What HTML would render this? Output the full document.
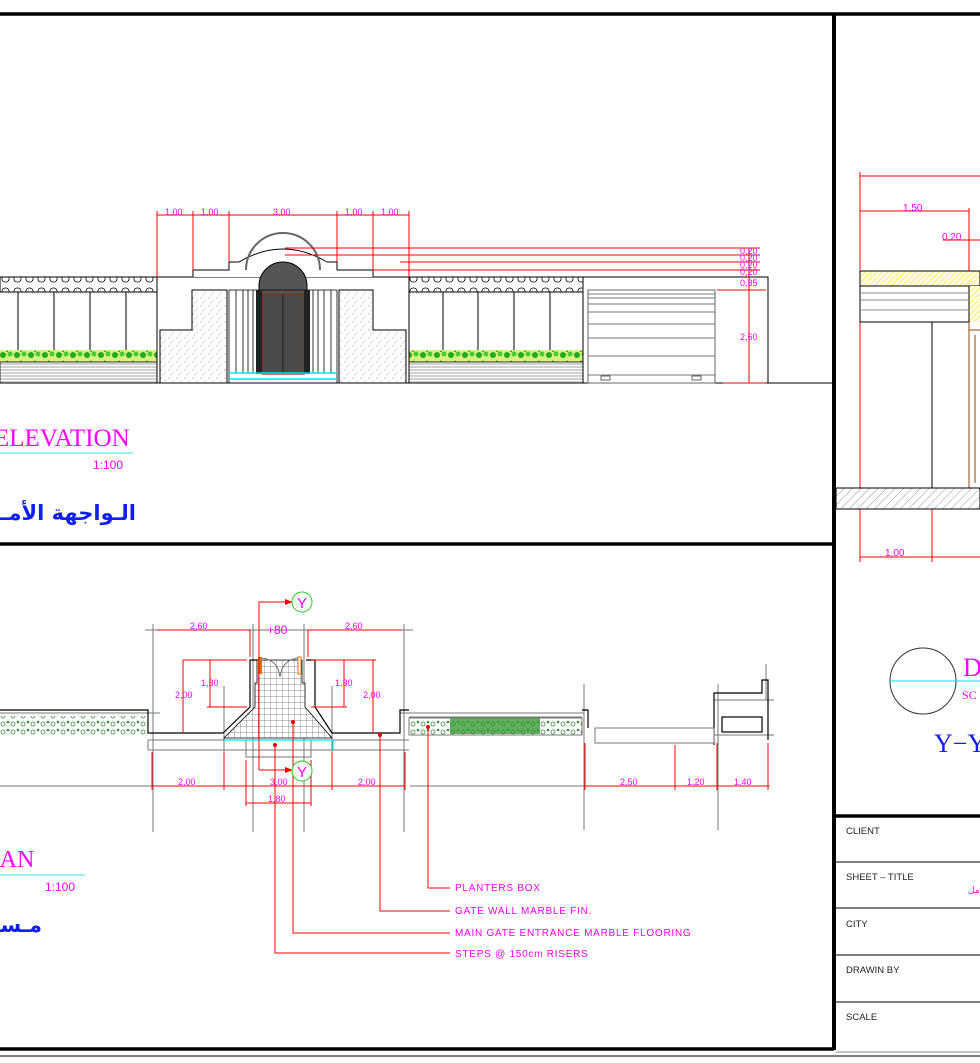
<!DOCTYPE html>
<html><head><meta charset="utf-8"><style>
html,body{margin:0;padding:0;background:#fff;width:980px;height:1063px;overflow:hidden}
svg{display:block}
.m{fill:#ff00ff;font-family:"Liberation Sans",sans-serif;font-size:9px}
.s{font-family:"Liberation Serif",serif}
.tb{font-family:"Liberation Sans",sans-serif;font-size:9.5px;fill:#222}
</style></head><body>
<svg width="980" height="1063" viewBox="0 0 980 1063" xmlns="http://www.w3.org/2000/svg">
<defs>
<pattern id="dots" width="8" height="8" patternUnits="userSpaceOnUse"><rect width="8" height="8" fill="#fff"/><circle cx="1" cy="2" r=".5" fill="#555"/><circle cx="5" cy="5" r=".5" fill="#777"/><circle cx="3" cy="7" r=".4" fill="#555"/></pattern>
<pattern id="bal" width="12" height="15" patternUnits="userSpaceOnUse"><rect width="12" height="15" fill="#fff"/><rect x="2" y="3" width="7" height="9" rx="3" fill="none" stroke="#000" stroke-width=".8"/></pattern>
<pattern id="hz" width="4" height="3" patternUnits="userSpaceOnUse"><rect width="4" height="3" fill="#fff"/><line x1="0" y1="1" x2="4" y2="1" stroke="#888" stroke-width=".8"/></pattern>
<pattern id="hy" width="4" height="4" patternUnits="userSpaceOnUse" patternTransform="rotate(45)"><rect width="4" height="4" fill="#fffbe0"/><line x1="0" y1="0" x2="0" y2="4" stroke="#eede30" stroke-width="1"/></pattern>
<pattern id="hg" width="6" height="6" patternUnits="userSpaceOnUse" patternTransform="rotate(45)"><rect width="6" height="6" fill="#fff"/><line x1="0" y1="0" x2="0" y2="6" stroke="#999" stroke-width="1"/></pattern>
<pattern id="grid" width="6" height="6" patternUnits="userSpaceOnUse"><rect width="6" height="6" fill="#fff"/><path d="M0 0H6M0 0V6" stroke="#666" stroke-width=".7"/></pattern>
<pattern id="gr" width="14" height="10" patternUnits="userSpaceOnUse"><rect width="14" height="10" fill="#d8f080"/><circle cx="3" cy="5" r="3" fill="#22aa22"/><circle cx="10" cy="4" r="2.5" fill="#44cc33"/><path d="M6 2l1-2 1 2z" fill="#119911"/></pattern>
<pattern id="gp" width="10" height="8" patternUnits="userSpaceOnUse"><rect width="10" height="8" fill="#fff"/><circle cx="3" cy="4" r="2" fill="none" stroke="#3a8a3a" stroke-width=".8"/><circle cx="8" cy="2" r="1.3" fill="#3a8a3a"/></pattern>
</defs>

<line x1="0" y1="14" x2="980" y2="14" stroke="#000" stroke-width="3.5"/>
<line x1="834" y1="13" x2="834" y2="1050" stroke="#000" stroke-width="4"/>
<line x1="0" y1="544" x2="834" y2="544" stroke="#000" stroke-width="3.5"/>
<line x1="0" y1="1049" x2="834" y2="1049" stroke="#000" stroke-width="3.5"/>
<line x1="834" y1="816" x2="980" y2="816" stroke="#000" stroke-width="3.5"/>
<line x1="0" y1="1056" x2="980" y2="1056" stroke="#000" stroke-width="1"/>
<line x1="836" y1="1052" x2="980" y2="1052" stroke="#888" stroke-width="1"/>
<g stroke="#000" stroke-width="1"><line x1="836" y1="862" x2="980" y2="862"/><line x1="836" y1="908" x2="980" y2="908"/><line x1="836" y1="955" x2="980" y2="955"/><line x1="836" y1="1002" x2="980" y2="1002"/></g>
<text class="tb" x="846" y="834">CLIENT</text>
<text class="tb" x="846" y="880">SHEET – TITLE</text>
<text x="968" y="893" style="font-size:9px;fill:#f0f;font-family:'DejaVu Sans',sans-serif">مل</text>
<text class="tb" x="846" y="927">CITY</text>
<text class="tb" x="846" y="973">DRAWIN BY</text>
<text class="tb" x="846" y="1020">SCALE</text>

<line x1="0" y1="383" x2="834" y2="383" stroke="#000" stroke-width="1"/>
<rect x="0" y="277" width="157" height="15" fill="url(#bal)" stroke="#000" stroke-width="1"/>
<g stroke="#000" stroke-width="1"><line x1="18" y1="292" x2="18" y2="352"/><line x1="54" y1="292" x2="54" y2="352"/><line x1="90" y1="292" x2="90" y2="352"/><line x1="126" y1="292" x2="126" y2="352"/></g>
<rect x="0" y="350" width="157" height="12" fill="url(#gr)"/>
<rect x="0" y="362" width="157" height="21" fill="url(#hz)" stroke="#000" stroke-width=".8"/>
<rect x="409" y="277" width="174" height="15" fill="url(#bal)" stroke="#000" stroke-width="1"/>
<line x1="409" y1="292" x2="583" y2="292" stroke="#000"/>
<g stroke="#000" stroke-width="1"><line x1="443" y1="292" x2="443" y2="352"/><line x1="478" y1="292" x2="478" y2="352"/><line x1="514" y1="292" x2="514" y2="352"/><line x1="550" y1="292" x2="550" y2="352"/></g>
<rect x="409" y="350" width="174" height="12" fill="url(#gr)"/>
<rect x="409" y="362" width="174" height="21" fill="url(#hz)" stroke="#000" stroke-width=".8"/>
<rect x="583" y="277" width="185" height="106" fill="none" stroke="#000" stroke-width="1"/>
<rect x="588" y="290" width="127" height="93" fill="#fff" stroke="#666" stroke-width="1"/>
<g stroke="#777" stroke-width="1"><line x1="588" y1="294" x2="715" y2="294"/><line x1="588" y1="298" x2="715" y2="298"/><line x1="588" y1="304" x2="715" y2="304"/><line x1="588" y1="312" x2="715" y2="312"/><line x1="588" y1="324" x2="715" y2="324"/><line x1="588" y1="338" x2="715" y2="338"/><line x1="588" y1="356" x2="715" y2="356"/><line x1="588" y1="375" x2="715" y2="375"/></g>
<rect x="601" y="376" width="9" height="4" fill="none" stroke="#666"/><rect x="692" y="376" width="9" height="4" fill="none" stroke="#666"/>
<rect x="157" y="277" width="252" height="106" fill="#fff" stroke="#000" stroke-width="1"/>
<path d="M193 277V270H229V262L239 262Q283 236 327 262H337V270H373V277" fill="#fff" stroke="#000"/>
<path d="M246 270A37 37 0 0 1 320 270" fill="none" stroke="#666" stroke-width="2"/>
<path d="M259 294V286A24 24 0 0 1 307 286V294Z" fill="#555" stroke="#000"/>
<path d="M160 383V330H192V290H227V383Z" fill="url(#dots)" stroke="#000"/>
<path d="M406 383V330H373V290H339V383Z" fill="url(#dots)" stroke="#000"/>
<g stroke="#000" stroke-width=".8"><line x1="229" y1="290" x2="229" y2="383"/><line x1="236" y1="290" x2="236" y2="373"/><line x1="243" y1="290" x2="243" y2="373"/><line x1="248" y1="290" x2="248" y2="373"/><line x1="253" y1="290" x2="253" y2="373"/><line x1="313" y1="290" x2="313" y2="373"/><line x1="318" y1="290" x2="318" y2="373"/><line x1="324" y1="290" x2="324" y2="373"/><line x1="331" y1="290" x2="331" y2="373"/><line x1="337" y1="290" x2="337" y2="383"/><line x1="229" y1="290" x2="337" y2="290"/></g>
<rect x="262" y="294" width="42" height="80" fill="#4a4a4a" stroke="#7a3a10" stroke-width="1.2"/>
<line x1="283" y1="294" x2="283" y2="374" stroke="#222"/>
<rect x="256" y="290" width="6" height="84" fill="#222"/><rect x="304" y="290" width="6" height="84" fill="#222"/>
<g stroke="#00e5ee" stroke-width="1.5"><line x1="229" y1="373" x2="337" y2="373"/><line x1="229" y1="379" x2="337" y2="379"/></g>
<g stroke="#f00" stroke-width="1" fill="none">
<line x1="157" y1="215" x2="409" y2="215"/>
<line x1="157" y1="211" x2="157" y2="277"/><line x1="193" y1="211" x2="193" y2="270"/><line x1="229" y1="211" x2="229" y2="262"/><line x1="337" y1="211" x2="337" y2="262"/><line x1="373" y1="211" x2="373" y2="270"/><line x1="409" y1="211" x2="409" y2="277"/>
<line x1="285" y1="248" x2="760" y2="248"/><line x1="285" y1="255" x2="760" y2="255"/><line x1="400" y1="262" x2="760" y2="262"/><line x1="373" y1="270" x2="760" y2="270"/>
<line x1="717" y1="290" x2="766" y2="290"/><line x1="723" y1="383" x2="766" y2="383"/>
<line x1="749" y1="248" x2="749" y2="383"/>
</g>
<g class="m"><text x="165" y="215">1,00</text><text x="201" y="215">1,00</text><text x="273" y="215">3,00</text><text x="345" y="215">1,00</text><text x="381" y="215">1,00</text>
<text x="740" y="254">0,20</text><text x="740" y="261">0,20</text><text x="740" y="268">0,20</text><text x="740" y="275">0,20</text><text x="740" y="286">0,35</text><text x="740" y="340">2,60</text></g>
<text class="s" x="-6" y="446" style="font-size:25px;fill:#ff00ff">ELEVATION</text>
<line x1="0" y1="453" x2="133" y2="453" stroke="#30e0f0" stroke-width="1"/>
<text x="93" y="469" style="font-family:'Liberation Sans',sans-serif;font-size:12px;fill:#f0f">1:100</text>
<text x="136" y="520" text-anchor="end" style="font-family:'DejaVu Sans',sans-serif;font-weight:bold;font-size:21px;fill:#1020f0">الـواجهة الأمـــ</text>

<g stroke="#f00" stroke-width="1"><line x1="860" y1="176" x2="980" y2="176"/><line x1="860" y1="211" x2="969" y2="211"/><line x1="943" y1="240" x2="980" y2="240"/><line x1="969" y1="208" x2="969" y2="282"/><line x1="860" y1="172" x2="860" y2="270"/><line x1="860" y1="295" x2="860" y2="562"/><line x1="932" y1="492" x2="932" y2="562"/><line x1="860" y1="557" x2="980" y2="557"/></g>
<g class="m" style="font-size:10px"><text x="903" y="211">1,50</text><text x="942" y="240">0,20</text><text x="885" y="556">1,00</text></g>
<rect x="860" y="271" width="120" height="15" fill="url(#hy)" stroke="#000"/>
<rect x="969" y="286" width="11" height="36" fill="url(#hy)"/>
<rect x="860" y="286" width="109" height="36" fill="#fff" stroke="#000"/>
<g stroke="#888"><line x1="860" y1="293" x2="969" y2="293"/><line x1="860" y1="300" x2="969" y2="300"/><line x1="860" y1="310" x2="969" y2="310"/></g>
<line x1="932" y1="322" x2="932" y2="488" stroke="#000"/>
<path d="M969 322V488H980M969 330H980M975 335V483" fill="none" stroke="#8b4a10"/>
<rect x="836" y="488" width="144" height="21" fill="url(#hg)" stroke="#000"/>
<circle cx="923" cy="681" r="33" fill="none" stroke="#333"/>
<line x1="890" y1="681" x2="980" y2="681" stroke="#00e5ee"/>
<text class="s" x="963" y="676" style="font-size:26px;fill:#ff00ff">D</text>
<text class="s" x="962" y="699" style="font-size:12px;fill:#ff00ff">SC</text>
<text class="s" x="934" y="752" style="font-size:26px;fill:#1020f0">Y−Y</text>

<g stroke="#777" stroke-width="1">
<line x1="145" y1="630" x2="413" y2="630"/>
<line x1="153" y1="624" x2="153" y2="832"/><line x1="253" y1="624" x2="253" y2="832"/><line x1="304" y1="624" x2="304" y2="832"/><line x1="404" y1="624" x2="404" y2="832"/>
<line x1="224" y1="686" x2="224" y2="790"/><line x1="332" y1="686" x2="332" y2="790"/>
<line x1="0" y1="786" x2="405" y2="786"/><line x1="410" y1="786" x2="770" y2="786"/>
<line x1="584" y1="684" x2="584" y2="830"/><line x1="718" y1="684" x2="718" y2="830"/><line x1="766" y1="664" x2="766" y2="700"/>
<line x1="148" y1="740" x2="409" y2="740"/><line x1="148" y1="750" x2="409" y2="750"/><line x1="148" y1="740" x2="148" y2="750"/>
<rect x="246" y="740" width="65" height="17" fill="none"/>
<line x1="0" y1="713" x2="160" y2="713"/>
<line x1="400" y1="713" x2="584" y2="713"/><line x1="409" y1="717" x2="582" y2="717"/>
<line x1="714" y1="700" x2="774" y2="700"/><line x1="714" y1="735" x2="774" y2="735"/>
</g>
<rect x="0" y="716" width="147" height="19" fill="url(#gp)"/>
<rect x="409" y="718" width="173" height="17" fill="url(#gp)" stroke="#777"/>
<rect x="450" y="718" width="90" height="16" fill="#3a9a3a" opacity=".8"/>
<path d="M0 710H148V733H223L250 707V660H259M306 660H315V707L332 733H400V710H409M582 710H588V728M714 745V693H762V680H768V740" fill="none" stroke="#000" stroke-width="1.2"/>
<path d="M255 683H257V660H302V683H305V707L332 738H224L255 707Z" fill="url(#grid)" stroke="#000" stroke-width=".8"/>
<rect x="258" y="657" width="4" height="17" fill="#e07000"/><rect x="298" y="657" width="3" height="17" fill="#fff" stroke="#e07000"/>
<path d="M262 658Q278 660 280 677Q282 660 298 658" fill="none" stroke="#777"/>
<rect x="595" y="728" width="119" height="15" fill="#fff" stroke="#777"/>
<rect x="722" y="717" width="40" height="15" fill="none" stroke="#000" stroke-width="1.2"/>
<line x1="224" y1="740" x2="333" y2="740" stroke="#00e5ee" stroke-width="1.2"/>
<line x1="333" y1="740" x2="333" y2="750" stroke="#00e5ee" stroke-width="1.2"/>
<g stroke="#f00" stroke-width="1" fill="none">
<line x1="157" y1="630" x2="250" y2="630"/><line x1="308" y1="630" x2="402" y2="630"/>
<line x1="250" y1="630" x2="250" y2="657"/><line x1="308" y1="630" x2="308" y2="657"/>
<line x1="183" y1="660" x2="247" y2="660"/><line x1="183" y1="660" x2="183" y2="733"/><line x1="210" y1="660" x2="210" y2="707"/><line x1="207" y1="707" x2="247" y2="707"/>
<line x1="311" y1="660" x2="376" y2="660"/><line x1="373" y1="660" x2="373" y2="733"/><line x1="344" y1="660" x2="344" y2="707"/><line x1="311" y1="707" x2="347" y2="707"/>
<line x1="152" y1="786" x2="405" y2="786"/><line x1="152" y1="752" x2="152" y2="790"/><line x1="224" y1="752" x2="224" y2="790"/><line x1="332" y1="752" x2="332" y2="790"/><line x1="405" y1="752" x2="405" y2="790"/>
<line x1="246" y1="803" x2="311" y2="803"/><line x1="246" y1="760" x2="246" y2="806"/><line x1="311" y1="760" x2="311" y2="806"/>
<line x1="584" y1="786" x2="768" y2="786"/><line x1="585" y1="743" x2="585" y2="790"/><line x1="675" y1="745" x2="675" y2="790"/><line x1="717" y1="743" x2="717" y2="790"/><line x1="768" y1="743" x2="768" y2="790"/>
<path d="M259 770V602H291"/><path d="M259 770H291"/>
<path d="M428 727V888H450M380 735V911H450M293 722V933H450M275 745V953H450"/>
</g>
<g fill="#f00"><path d="M285 599L293 602L285 605Z"/><path d="M285 767L293 770L285 773Z"/><circle cx="428" cy="727" r="2"/><circle cx="380" cy="735" r="2"/><circle cx="293" cy="722" r="2"/><circle cx="275" cy="745" r="2"/></g>
<circle cx="302" cy="602" r="10" fill="#fff" stroke="#2c2" stroke-width="1"/>
<circle cx="302" cy="771" r="10" fill="#fff" stroke="#2c2" stroke-width="1"/>
<text x="302" y="608" text-anchor="middle" style="font-family:'Liberation Sans',sans-serif;font-size:15px;fill:#f0f">Y</text>
<text x="302" y="777" text-anchor="middle" style="font-family:'Liberation Sans',sans-serif;font-size:15px;fill:#f0f">Y</text>
<g class="m"><text x="190" y="629">2,60</text><text x="345" y="629">2,60</text><text x="175" y="698">2,00</text><text x="201" y="686">1,30</text><text x="335" y="686">1,30</text><text x="363" y="698">2,00</text>
<text x="178" y="785">2,00</text><text x="270" y="785">3,00</text><text x="358" y="785">2,00</text><text x="268" y="802">1,80</text>
<text x="620" y="785">2,50</text><text x="687" y="785">1,20</text><text x="734" y="785">1,40</text></g>
<text x="267" y="634" style="font-family:'Liberation Sans',sans-serif;font-size:12px;fill:#f0f">+80</text>
<g class="m" style="font-size:10px;letter-spacing:.75px"><text x="455" y="891">PLANTERS  BOX</text><text x="455" y="914">GATE  WALL  MARBLE  FIN.</text><text x="455" y="936">MAIN  GATE  ENTRANCE  MARBLE  FLOORING</text><text x="455" y="957">STEPS  @  150cm  RISERS</text></g>
<text class="s" x="-15" y="867" style="font-size:24px;fill:#ff00ff">LAN</text>
<line x1="0" y1="875" x2="85" y2="875" stroke="#30e0f0"/>
<text x="45" y="891" style="font-family:'Liberation Sans',sans-serif;font-size:12px;fill:#f0f">1:100</text>
<text x="42" y="932" text-anchor="end" style="font-family:'DejaVu Sans',sans-serif;font-weight:bold;font-size:21px;fill:#1020f0">مـسـقـ</text>
</svg>
</body></html>
